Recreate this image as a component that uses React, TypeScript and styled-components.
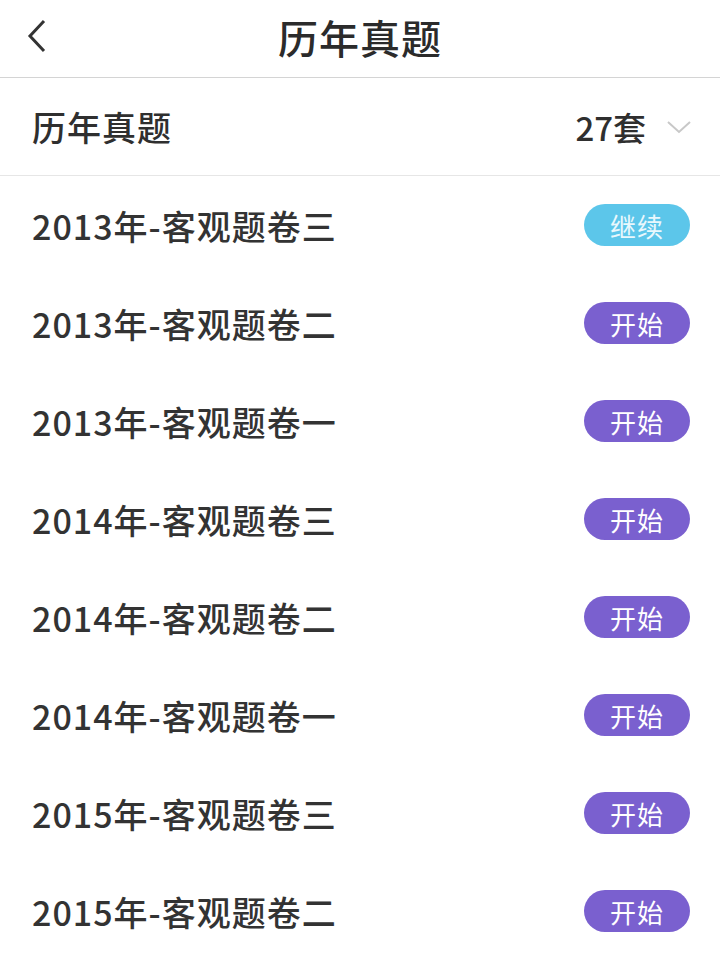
import React from "react";
import styled, { createGlobalStyle } from "styled-components";

const GlobalStyle = createGlobalStyle`
  body {
    margin: 0;
    background: #ffffff;
    font-family: "Noto Sans CJK SC", "Noto Sans", sans-serif;
  }
`;

const Page = styled.div`
  width: 720px;
  height: 960px;
  overflow: hidden;
  background: #ffffff;
  color: #333333;
`;

const Header = styled.div`
  height: 77px;
  display: flex;
  align-items: center;
  justify-content: center;
  position: relative;
  border-bottom: 1px solid #d4d4d4;
`;

const BackButton = styled.div`
  position: absolute;
  left: 26px;
  top: 18px;
  width: 28px;
  height: 36px;
  display: flex;
  align-items: center;
`;

const Title = styled.div`
  font-size: 40px;
  font-weight: 500;
  color: #2b2b2b;
  margin-top: -4px;
  letter-spacing: 1px;
`;

const Section = styled.div`
  height: 97px;
  display: flex;
  align-items: center;
  justify-content: space-between;
  padding: 0 28px 0 32px;
  border-bottom: 1px solid #e6e6e6;
`;

const SectionTitle = styled.div`
  font-size: 34px;
  font-weight: 500;
  color: #2f2f2f;
  letter-spacing: 1px;
`;

const Count = styled.div`
  display: flex;
  align-items: center;
  gap: 20px;
  font-size: 33px;
  font-weight: 500;
  color: #2f2f2f;
`;

const List = styled.div`
  display: flex;
  flex-direction: column;
`;

const Row = styled.div`
  height: 98px;
  display: flex;
  align-items: center;
  justify-content: space-between;
  padding: 0 30px 0 32px;
`;

const RowTitle = styled.div`
  font-size: 34px;
  font-weight: 500;
  color: #333333;
  letter-spacing: 1px;
`;

const ActionButton = styled.div<{ $resume?: boolean }>`
  width: 106px;
  height: 42px;
  border-radius: 21px;
  background: ${(p) => (p.$resume ? "#5cc6ea" : "#7a60cf")};
  color: ${(p) => (p.$resume ? "#e9f8fd" : "#ffffff")};
  font-size: 26px;
  display: flex;
  align-items: center;
  justify-content: center;
  letter-spacing: 1px;
`;

const items = [
  { title: "2013年-客观题卷三", resume: true },
  { title: "2013年-客观题卷二" },
  { title: "2013年-客观题卷一" },
  { title: "2014年-客观题卷三" },
  { title: "2014年-客观题卷二" },
  { title: "2014年-客观题卷一" },
  { title: "2015年-客观题卷三" },
  { title: "2015年-客观题卷二" },
];

export default function App() {
  return (
    <Page>
      <GlobalStyle />
      <Header>
        <BackButton>
          <svg width="22" height="34" viewBox="0 0 22 34">
            <path d="M18 2 L4 17 L18 32" fill="none" stroke="#333" strokeWidth="3" />
          </svg>
        </BackButton>
        <Title>历年真题</Title>
      </Header>
      <Section>
        <SectionTitle>历年真题</SectionTitle>
        <Count>
          27套
          <svg width="26" height="16" viewBox="0 0 26 16">
            <path d="M2 3 L13 13 L24 3" fill="none" stroke="#c8c8c8" strokeWidth="2" />
          </svg>
        </Count>
      </Section>
      <List>
        {items.map((it) => (
          <Row key={it.title}>
            <RowTitle>{it.title}</RowTitle>
            <ActionButton $resume={it.resume}>{it.resume ? "继续" : "开始"}</ActionButton>
          </Row>
        ))}
      </List>
    </Page>
  );
}
